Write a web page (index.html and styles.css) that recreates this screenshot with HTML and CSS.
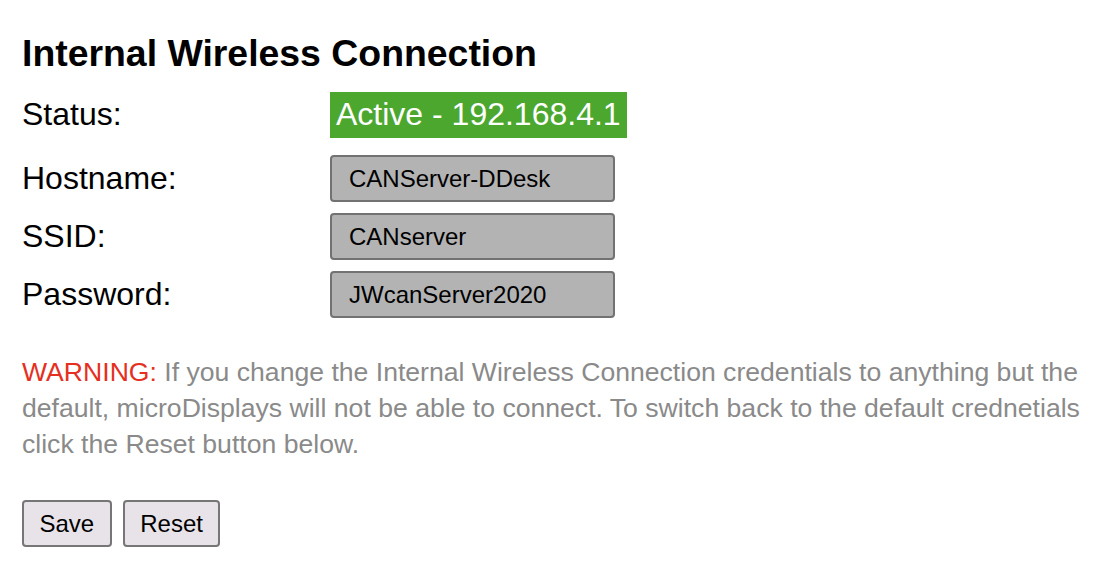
FILE: index.html
```html
<!DOCTYPE html>
<html>
<head>
<meta charset="utf-8">
<link rel="stylesheet" href="styles.css">
</head>
<body>
<div class="page">
  <h3 class="title">Internal Wireless Connection</h3>
  <div class="form">
    <div class="label label-top">Status:</div>
    <div class="value"><span class="status">Active - 192.168.4.1</span></div>
    <div class="label">Hostname:</div>
    <div class="value"><input class="field" type="text" value="CANServer-DDesk"></div>
    <div class="label">SSID:</div>
    <div class="value"><input class="field" type="text" value="CANserver"></div>
    <div class="label">Password:</div>
    <div class="value"><input class="field" type="text" value="JWcanServer2020"></div>
  </div>
  <p class="note"><span class="warn">WARNING:</span> If you change the Internal Wireless Connection credentials to anything but the default, microDisplays will not be able to connect. To switch back to the default crednetials click the Reset button below.</p>
  <div class="buttons">
    <button class="btn">Save</button>
    <button class="btn">Reset</button>
  </div>
</div>
</body>
</html>
```

FILE: styles.css
```css
html, body {
  margin: 0;
  padding: 0;
  background: #ffffff;
}
body {
  font-family: "Liberation Sans", Arial, Helvetica, sans-serif;
  color: #000000;
}
.page {
  padding: 32px 22px 0 22px;
}
.title {
  font-size: 37.4px;
  font-weight: bold;
  margin: 0 0 17px 0;
  line-height: 1.15;
}
.form {
  display: grid;
  grid-template-columns: 308px auto;
  row-gap: 11px;
  align-items: center;
}
.label {
  font-size: 32px;
  line-height: 37px;
}
.label-top {
  align-self: start;
  padding-top: 4px;
}
.value {
  display: flex;
}
.status {
  display: inline-block;
  background: #4ca72f;
  color: #ffffff;
  font-size: 32px;
  line-height: 37px;
  padding: 4px 6px 5px 6px;
  margin-bottom: 6px;
}
.field {
  box-sizing: border-box;
  width: 285px;
  height: 47px;
  background: #b3b3b3;
  border: 2px solid #727272;
  border-radius: 4px;
  font-family: "Liberation Sans", Arial, Helvetica, sans-serif;
  font-size: 24px;
  color: #000000;
  padding: 0 0 0 17px;
  margin: 0;
}
.note {
  font-size: 26.6px;
  line-height: 36px;
  color: #8a8a8a;
  margin: 36px 0 0 0;
}
.warn {
  color: #e5301f;
}
.buttons {
  display: flex;
  gap: 11px;
  margin-top: 38px;
}
.btn {
  box-sizing: border-box;
  height: 47px;
  padding: 0 15.5px;
  background: #e8e3e8;
  border: 2px solid #767676;
  border-radius: 4px;
  font-family: "Liberation Sans", Arial, Helvetica, sans-serif;
  font-size: 24px;
  color: #000000;
}
```
